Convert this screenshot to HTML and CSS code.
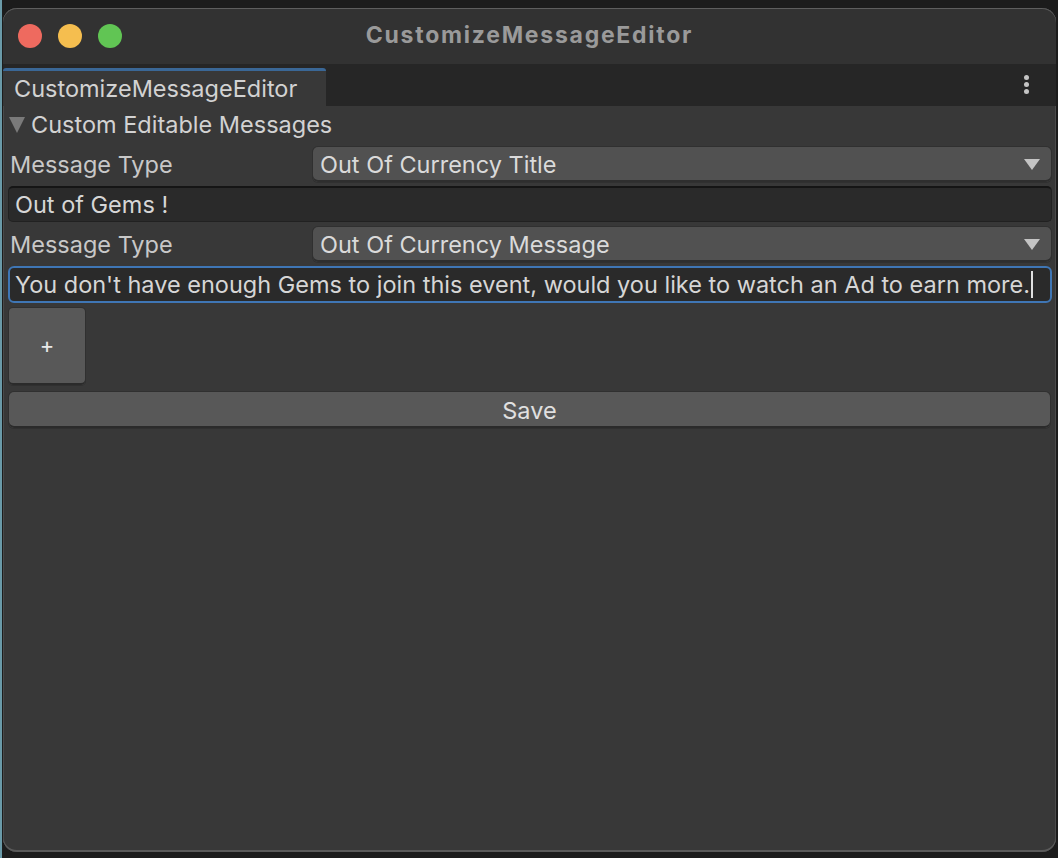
FILE: index.html
```html
<!DOCTYPE html>
<html>
<head>
<meta charset="utf-8">
<link rel="stylesheet" href="styles.css">
</head>
<body>
<div class="desk">
  <div class="window">
    <div class="titlebar">
      <div class="lights">
        <span class="light red"></span>
        <span class="light yellow"></span>
        <span class="light green"></span>
      </div>
      <div class="title">CustomizeMessageEditor</div>
    </div>
    <div class="tabbar">
      <div class="tab">CustomizeMessageEditor</div>
      <div class="kebab"><span></span><span></span><span></span></div>
    </div>
    <div class="content">
      <div class="foldout"><span class="tri"></span><span>Custom Editable Messages</span></div>
      <div class="field-row">
        <div class="label">Message Type</div>
        <div class="dropdown"><span>Out Of Currency Title</span><span class="arrow"></span></div>
      </div>
      <div class="textfield">Out of Gems !</div>
      <div class="field-row second">
        <div class="label">Message Type</div>
        <div class="dropdown"><span>Out Of Currency Message</span><span class="arrow"></span></div>
      </div>
      <div class="textfield focused">You don't have enough Gems to join this event, would you like to watch an Ad to earn more.<span class="caret"></span></div>
      <div class="plus">+</div>
      <div class="save">Save</div>
    </div>
  </div>
</div>
</body>
</html>
```

FILE: styles.css
```css
html, body {
  margin: 0;
  padding: 0;
  background: #1c1c1c;
  width: 1058px;
  height: 858px;
  overflow: hidden;
  font-family: Inter, "Noto Sans", sans-serif;
}
.desk {
  padding: 8px 2px 6px 3px;
  height: 858px;
  box-sizing: border-box;
  border-left: 2px solid #6a9aa8;
}
.window {
  height: 844px;
  margin-left: -2px;
  background: #383838;
  border-radius: 14px;
  box-shadow: inset 0 1px 0 #5e5e5e, inset 0 -2px 0 #5a5a5a, inset 1px 0 0 #4a4a4a, inset -1px 0 0 #4a4a4a;
  overflow: hidden;
  display: flex;
  flex-direction: column;
}
.titlebar {
  height: 56px;
  flex: none;
  background: #323232;
  box-shadow: inset 0 1px 0 #5e5e5e;
  border-radius: 14px 14px 0 0;
  position: relative;
  display: flex;
  align-items: center;
  justify-content: center;
}
.lights {
  position: absolute;
  left: 15px;
  top: 16px;
  display: flex;
  gap: 16px;
}
.light {
  width: 24px;
  height: 24px;
  border-radius: 50%;
  display: block;
}
.red { background: #ee6a5f; }
.yellow { background: #f5be4f; }
.green { background: #61c554; }
.title {
  font-weight: 700;
  font-size: 23px;
  letter-spacing: 1.75px;
  color: #9a9a9a;
  margin-top: -2px;
  margin-left: 0;
}
.tabbar {
  height: 42px;
  flex: none;
  background: #262626;
  display: flex;
  align-items: flex-end;
  justify-content: space-between;
}
.tab {
  width: 323px;
  height: 38px;
  box-sizing: border-box;
  background: #383838;
  border-top: 3px solid #3a6796;
  border-radius: 3px 3px 0 0;
  color: #d2d2d2;
  font-size: 23.5px;
  padding-left: 11px;
  line-height: 35px;
}
.kebab {
  align-self: center;
  display: flex;
  flex-direction: column;
  gap: 2px;
  margin-right: 27px;
  margin-top: -2px;
}
.kebab span {
  width: 5px;
  height: 5px;
  border-radius: 50%;
  background: #c4c4c4;
  display: block;
}
.content {
  flex: 1;
  padding: 0 4px 0 5px;
  color: #d2d2d2;
  font-size: 23.5px;
}
.foldout {
  height: 38px;
  display: flex;
  align-items: center;
  gap: 6px;
  padding-left: 1px;
  margin-top: -1px;
}
.tri {
  width: 0;
  height: 0;
  border-left: 8px solid transparent;
  border-right: 8px solid transparent;
  border-top: 16px solid #7a7a7a;
  margin-top: 1px;
}
.field-row {
  height: 35px;
  margin-top: 4px;
  display: flex;
  align-items: center;
}
.field-row.second {
  margin-top: 5px;
}
.label {
  width: 303px;
  padding-left: 2px;
  flex: none;
  color: #c8c8c8;
}
.dropdown {
  flex: 1;
  height: 35px;
  box-sizing: border-box;
  background: #515151;
  border-radius: 5px;
  box-shadow: inset 0 -2px 0 #2e2e2e, 0 0 0 1px #303030;
  display: flex;
  align-items: center;
  justify-content: space-between;
  padding: 0 11px 0 7px;
  margin-right: 1px;
  color: #dadada;
}
.arrow {
  width: 0;
  height: 0;
  border-left: 8px solid transparent;
  border-right: 8px solid transparent;
  border-top: 11px solid #c4c4c4;
}
.textfield {
  height: 36px;
  margin-top: 4px;
  box-sizing: border-box;
  background: #2a2a2a;
  border: 1px solid #212121;
  border-top: 2px solid #151515;
  border-radius: 5px;
  padding: 0 6px;
  color: #d6d6d6;
  white-space: nowrap;
  display: flex;
  align-items: center;
}
.textfield.focused {
  margin-top: 4px;
  height: 37px;
  border: 2px solid #3f76b5;
  border-radius: 6px;
  padding: 0 5px;
}
.caret {
  display: inline-block;
  width: 2px;
  height: 27px;
  background: #e0e0e0;
  margin-left: 1px;
}
.plus {
  width: 76px;
  height: 77px;
  margin: 5px 0 0 1px;
  box-sizing: border-box;
  background: #585858;
  border-radius: 4px;
  box-shadow: inset 0 -2px 0 #2b2b2b, 0 0 0 1px #303030;
  display: flex;
  align-items: center;
  justify-content: center;
  font-size: 22px;
  color: #e8e8e8;
  padding-bottom: 3px;
}
.save {
  height: 36px;
  margin: 7px 2px 0 1px;
  box-sizing: border-box;
  background: #585858;
  border-radius: 5px;
  box-shadow: inset 0 -2px 0 #2b2b2b, 0 0 0 1px #303030;
  display: flex;
  align-items: center;
  justify-content: center;
  color: #e0e0e0;
}
```
